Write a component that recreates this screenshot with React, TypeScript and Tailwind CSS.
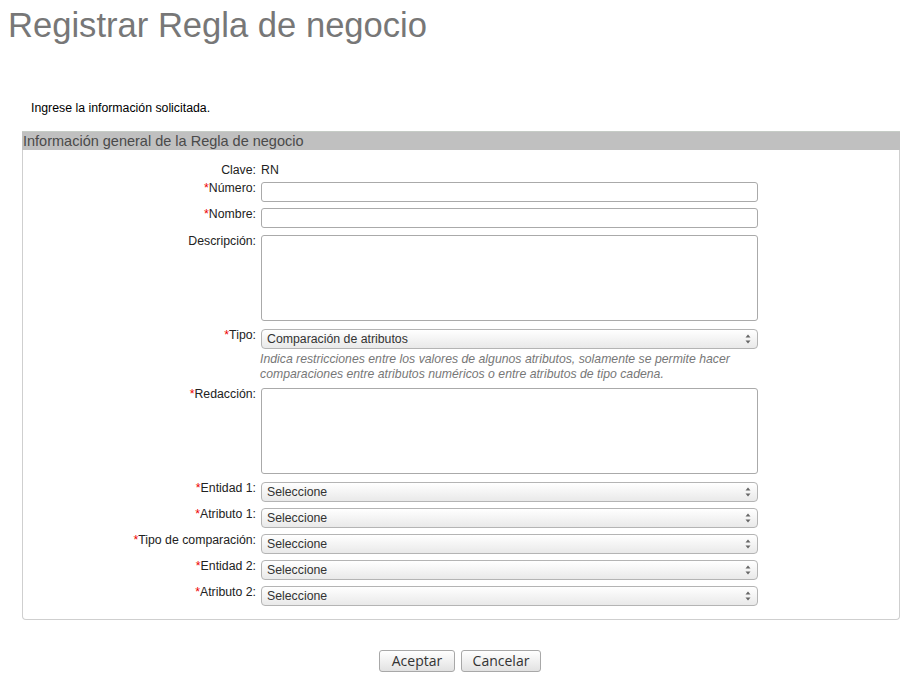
import type { ReactNode } from "react";

const FONT = "font-['Liberation_Sans',Arial,sans-serif]";

function Label({ text, required }: { text: string; required?: boolean }) {
  return (
    <div className="w-[234px] shrink-0 pr-[1px] pt-[1px] text-right text-[12.3px] leading-[14px] text-[#222]">
      {required ? <span className="text-[#e00]">*</span> : null}
      {text}
    </div>
  );
}

function Row({ label, required, className, children }: { label: string; required?: boolean; className: string; children: ReactNode }) {
  return (
    <div className={`flex items-start gap-[4px] ${className}`}>
      <Label text={label} required={required} />
      <div className="mt-[2px]">{children}</div>
    </div>
  );
}

function TextInput() {
  return <input type="text" className="block h-[20px] w-[497px] rounded-[3px] border border-[#aaa] bg-white px-1 text-[12px] outline-none" />;
}

function TextArea() {
  return <textarea className="block h-[86px] w-[497px] resize-none rounded-[3px] border border-[#aaa] bg-white px-1 text-[12px] outline-none" />;
}

function Select({ value }: { value: string }) {
  return (
    <div className="relative h-[20px] w-[497px]">
      <select
        defaultValue={value}
        className="block h-[20px] w-full appearance-none rounded-[4px] border border-[#b4b4b4] bg-gradient-to-b from-white to-[#e9e9e9] pl-[5px] text-[12.3px] leading-[18px] text-[#333] outline-none"
      >
        <option>{value}</option>
      </select>
      <svg className="pointer-events-none absolute right-[7px] top-[5px]" width="6" height="10" viewBox="0 0 6 10">
        <path d="M3 0.5 L5.5 3.5 L0.5 3.5 Z" fill="#666" />
        <path d="M0.5 6.5 L5.5 6.5 L3 9.5 Z" fill="#666" />
      </svg>
    </div>
  );
}

export default function App() {
  return (
    <main className={`min-h-screen bg-white ${FONT}`}>
      <h1 className="ml-[8px] pt-[5px] text-[34.6px] font-normal leading-[40px] text-[#777]">Registrar Regla de negocio</h1>

      <div className="ml-[22px] w-[878px]">
        <p className="mt-[56px] pl-[9px] text-[12.3px] leading-[14px] text-black">Ingrese la información solicitada.</p>

        <section className="mt-[16px] rounded-b-[4px] border border-t-0 border-[#cfcfcf] pb-[13px]">
          <div className="-mx-px h-[19px] border-t border-[#c6ccc6] bg-[#c0c0c0] pl-[1px] text-[14.5px] leading-[18px] text-[#4a4a4a]">
            Información general de la Regla de negocio
          </div>

          <div className="mt-[12px] flex items-start gap-[4px]">
            <Label text="Clave:" />
            <span className="pt-[1px] text-[12.3px] leading-[14px] text-[#222]">RN</span>
          </div>

          <Row label="Número:" required className="mt-[3px]">
            <TextInput />
          </Row>
          <Row label="Nombre:" required className="mt-[4px]">
            <TextInput />
          </Row>
          <Row label="Descripción:" className="mt-[5px]">
            <TextArea />
          </Row>
          <Row label="Tipo:" required className="mt-[6px]">
            <Select value="Comparación de atributos" />
          </Row>
          <p className="ml-[237px] mt-[3px] w-[500px] text-[12.25px] italic leading-[15px] text-[#777]">
            Indica restricciones entre los valores de algunos atributos, solamente se permite hacer comparaciones entre atributos numéricos o entre atributos de tipo cadena.
          </p>
          <Row label="Redacción:" required className="mt-[4px]">
            <TextArea />
          </Row>
          <Row label="Entidad 1:" required className="mt-[6px]">
            <Select value="Seleccione" />
          </Row>
          <Row label="Atributo 1:" required className="mt-[4px]">
            <Select value="Seleccione" />
          </Row>
          <Row label="Tipo de comparación:" required className="mt-[4px]">
            <Select value="Seleccione" />
          </Row>
          <Row label="Entidad 2:" required className="mt-[4px]">
            <Select value="Seleccione" />
          </Row>
          <Row label="Atributo 2:" required className="mt-[4px]">
            <Select value="Seleccione" />
          </Row>
        </section>

        <div className="mt-[30px] flex justify-center gap-[6px] pr-[2px] font-['Open_Sans','DejaVu_Sans',sans-serif]">
          <button className="h-[22px] w-[76px] rounded-[3px] border border-[#a8a8a8] bg-gradient-to-b from-white to-[#e2e2e2] text-[14px] leading-[20px] text-[#333]">
            Aceptar
          </button>
          <button className="h-[22px] w-[80px] rounded-[3px] border border-[#a8a8a8] bg-gradient-to-b from-white to-[#e2e2e2] text-[14px] leading-[20px] text-[#333]">
            Cancelar
          </button>
        </div>
      </div>
    </main>
  );
}
